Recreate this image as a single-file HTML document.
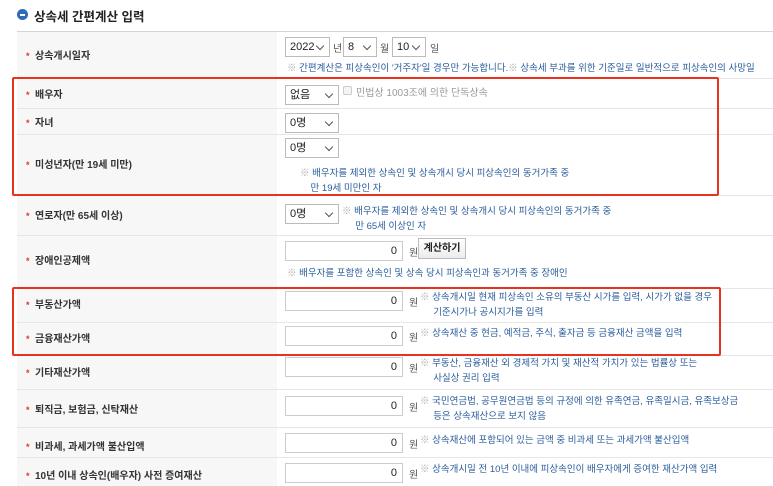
<!DOCTYPE html>
<html><head><meta charset="utf-8"><style>
*{margin:0;padding:0;box-sizing:border-box}
body{width:773px;height:486px;overflow:hidden;background:#fff;font-family:"Liberation Sans","Noto Sans CJK KR",sans-serif;position:relative;color:#333}
.a{position:absolute}
.title{left:34px;top:6px;font-size:12.5px;font-weight:bold;color:#222}
.ic{left:17px;top:9px;width:11px;height:11px;border-radius:50%;background:#2d6db5}
.ic:after{content:"";position:absolute;left:3px;top:4.5px;width:5px;height:2px;background:#fff}
.lab{left:17px;width:260px;background:#f7f7f7}
.line{left:17px;width:756px;height:1px;background:#e6e6e6}
.lt{left:35px;font-size:10px;font-weight:bold;color:#333;white-space:nowrap}
.lt:before{content:"*";position:absolute;left:-9px;top:4px;font-size:9px;color:#d33}
.sel{border:1px solid #bbb;background:#fff;font-size:11px;height:20px;line-height:18px;padding:0 4px;color:#222}
.sel:after{content:"";position:absolute;right:6px;top:5px;width:5px;height:5px;border-right:1px solid #555;border-bottom:1px solid #555;transform:rotate(45deg)}
.inp{left:285px;width:118px;height:20px;border:1px solid #ccc;font-size:11px;text-align:right;line-height:18px;padding:0 5px;color:#222;background:#fff}
.won{left:409px;font-size:10px;color:#555}
.n{font-size:9.5px;color:#2a5d9c;white-space:nowrap;line-height:15px}
.n b{color:#aaa;font-weight:normal}
.red{border:2px solid #e8321c;border-radius:2px}
</style></head><body>
<div class="a ic"></div><div class="a title">상속세 간편계산 입력</div>
<div class="a lab" style="top:32px;height:454px"></div>
<div class="a" style="left:17px;top:31px;width:756px;height:1px;background:#d5d5d5"></div>
<div class="a line" style="top:78px"></div>
<div class="a line" style="top:108px"></div>
<div class="a line" style="top:134px"></div>
<div class="a line" style="top:195px"></div>
<div class="a line" style="top:235px"></div>
<div class="a line" style="top:288px"></div>
<div class="a line" style="top:322px"></div>
<div class="a line" style="top:355px"></div>
<div class="a line" style="top:389px"></div>
<div class="a line" style="top:427px"></div>
<div class="a line" style="top:457px"></div>

<div class="a lt" style="top:47px">상속개시일자</div>
<div class="a lt" style="top:86px">배우자</div>
<div class="a lt" style="top:114px">자녀</div>
<div class="a lt" style="top:156px">미성년자(만 19세 미만)</div>
<div class="a lt" style="top:207px">연로자(만 65세 이상)</div>
<div class="a lt" style="top:252px">장애인공제액</div>
<div class="a lt" style="top:296px">부동산가액</div>
<div class="a lt" style="top:330px">금융재산가액</div>
<div class="a lt" style="top:364px">기타재산가액</div>
<div class="a lt" style="top:401px">퇴직금, 보험금, 신탁재산</div>
<div class="a lt" style="top:438px">비과세, 과세가액 불산입액</div>
<div class="a lt" style="top:467px">10년 이내 상속인(배우자) 사전 증여재산</div>

<div class="a sel" style="left:285px;top:37px;width:45px">2022</div>
<div class="a" style="left:333px;top:40px;font-size:10px;color:#555">년</div>
<div class="a sel" style="left:343px;top:37px;width:34px">8</div>
<div class="a" style="left:380px;top:40px;font-size:10px;color:#555">월</div>
<div class="a sel" style="left:392px;top:37px;width:34px">10</div>
<div class="a" style="left:430px;top:40px;font-size:10px;color:#555">일</div>
<div class="a n" style="left:287px;top:61px"><b>※</b> 간편계산은 피상속인이 '거주자'일 경우만 가능합니다.<b>※</b> 상속세 부과를 위한 기준일로 일반적으로 피상속인의 사망일</div>

<div class="a sel" style="left:285px;top:85px;width:54px">없음</div>
<div class="a" style="left:343px;top:86px;width:9px;height:9px;border:1px solid #ccc;border-radius:2px;background:#f4f4f4"></div>
<div class="a" style="left:356px;top:84px;font-size:10px;color:#999">민법상 1003조에 의한 단독상속</div>
<div class="a sel" style="left:285px;top:113px;width:54px">0명</div>
<div class="a sel" style="left:285px;top:138px;width:54px">0명</div>
<div class="a n" style="left:300px;top:166px"><b>※</b> 배우자를 제외한 상속인 및 상속개시 당시 피상속인의 동거가족 중<br>&nbsp;&nbsp;&nbsp;&nbsp;만 19세 미만인 자</div>

<div class="a sel" style="left:285px;top:204px;width:54px">0명</div>
<div class="a n" style="left:342px;top:204px"><b>※</b> 배우자를 제외한 상속인 및 상속개시 당시 피상속인의 동거가족 중<br>&nbsp;&nbsp;&nbsp;&nbsp;&nbsp;만 65세 이상인 자</div>

<div class="a inp" style="top:241px">0</div><div class="a won" style="top:244px">원</div>
<div class="a" style="left:418px;top:238px;width:48px;height:21px;border:1px solid #bbb;background:linear-gradient(#fff,#ececec);font-size:10px;font-weight:bold;text-align:center;line-height:19px;color:#222">계산하기</div>
<div class="a n" style="left:287px;top:266px"><b>※</b> 배우자를 포함한 상속인 및 상속 당시 피상속인과 동거가족 중 장애인</div>

<div class="a inp" style="top:291px">0</div><div class="a won" style="top:294px">원</div>
<div class="a n" style="left:420px;top:290px"><b>※</b> 상속개시일 현재 피상속인 소유의 부동산 시가를 입력, 시가가 없을 경우<br>&nbsp;&nbsp;&nbsp;&nbsp;&nbsp;기준시가나 공시지가를 입력</div>
<div class="a inp" style="top:326px">0</div><div class="a won" style="top:329px">원</div>
<div class="a n" style="left:420px;top:326px"><b>※</b> 상속재산 중 현금, 예적금, 주식, 출자금 등 금융재산 금액을 입력</div>
<div class="a inp" style="top:357px">0</div><div class="a won" style="top:360px">원</div>
<div class="a n" style="left:420px;top:356px"><b>※</b> 부동산, 금융재산 외 경제적 가치 및 재산적 가치가 있는 법률상 또는<br>&nbsp;&nbsp;&nbsp;&nbsp;&nbsp;사실상 권리 입력</div>
<div class="a inp" style="top:396px">0</div><div class="a won" style="top:399px">원</div>
<div class="a n" style="left:420px;top:394px"><b>※</b> 국민연금법, 공무원연금법 등의 규정에 의한 유족연금, 유족일시금, 유족보상금<br>&nbsp;&nbsp;&nbsp;&nbsp;&nbsp;등은 상속재산으로 보지 않음</div>
<div class="a inp" style="top:433px">0</div><div class="a won" style="top:436px">원</div>
<div class="a n" style="left:420px;top:433px"><b>※</b> 상속재산에 포함되어 있는 금액 중 비과세 또는 과세가액 불산입액</div>
<div class="a inp" style="top:463px">0</div><div class="a won" style="top:466px">원</div>
<div class="a n" style="left:420px;top:462px"><b>※</b> 상속개시일 전 10년 이내에 피상속인이 배우자에게 증여한 재산가액 입력</div>

<div class="a red" style="left:12px;top:77px;width:707px;height:119px"></div>
<div class="a red" style="left:12px;top:287px;width:709px;height:69px"></div>
</body></html>
